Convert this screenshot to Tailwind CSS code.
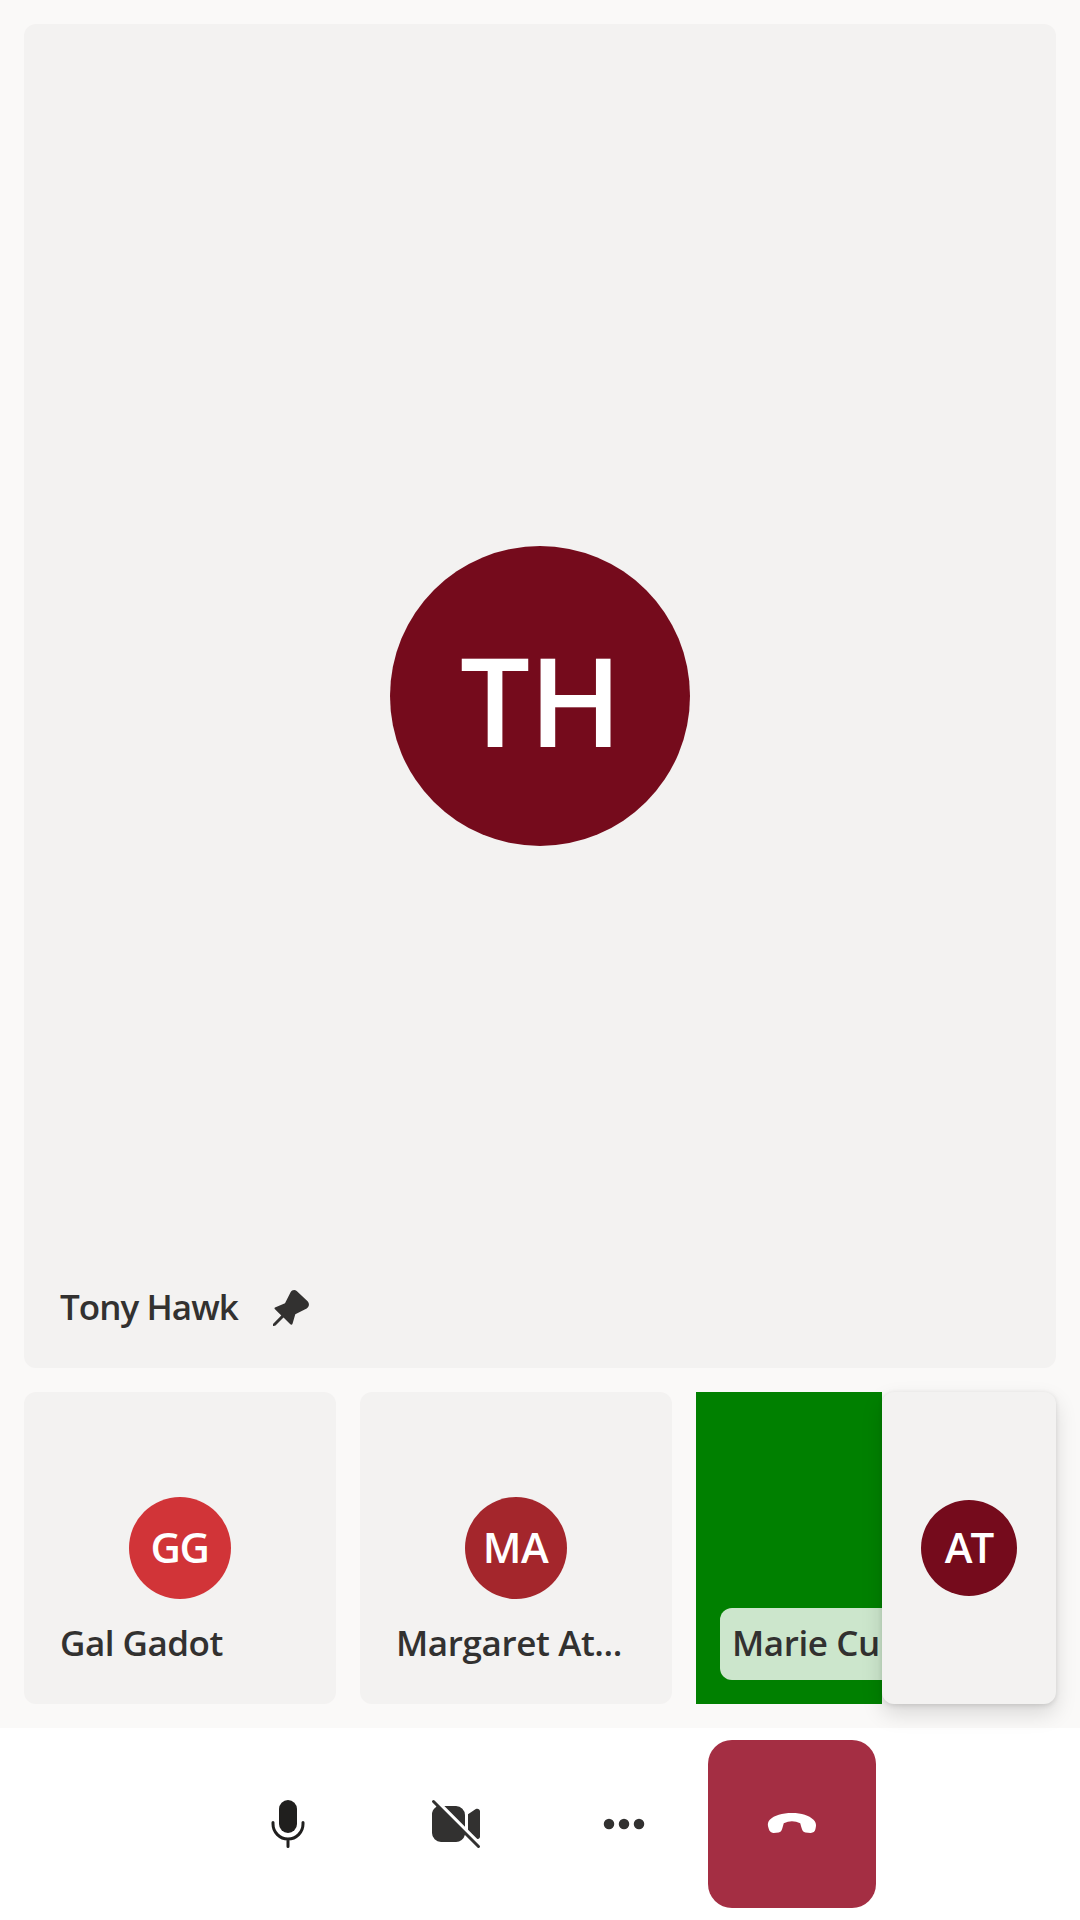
<!DOCTYPE html>
<html lang="en">
<head>
<meta charset="utf-8">
<title>Call</title>
<script src="https://cdn.jsdelivr.net/npm/@tailwindcss/browser@4"></script>
</head>
<body class="bg-white font-['Segoe_UI','Open_Sans','Noto_Sans',sans-serif] font-semibold text-[#323130]">
<div class="flex h-[1920px] w-[1080px] flex-col overflow-hidden">
  <main class="flex h-[1728px] shrink-0 flex-col gap-6 bg-[#faf9f8] p-6">
    <section class="relative flex h-[1344px] items-center justify-center rounded-xl bg-[#f3f2f1]">
      <div class="flex size-[300px] items-center justify-center rounded-full bg-[#750b1c] text-[124px] leading-none tracking-[-1px] text-white"><span class="pt-[5px] pl-px">TH</span></div>
      <div class="absolute bottom-6 left-6 flex h-[72px] items-center px-3 pb-0.5 text-[35px] tracking-[-0.95px]">
        <span class="whitespace-nowrap">Tony Hawk</span>
        <svg class="absolute left-[225px] top-[18px] size-9 overflow-visible" viewBox="0 0 36 36" fill="#323130"><path d="M17.7 2C18.7-.2 21.8-.8 23.700.900L34.600 11.300C36.800 13.600 36.200 17 33.700 18.500L22.300 24.300L19.600 33.600C19.200 34.900 18.200 35.100 17.300 34.300L10.500 27.600L2.500 35.600Q1.500 36.200 0 36V34L8.300 25.600L2 19.300C1.100 18.400 1.500 17.600 2.600 17.200L12 13.300Z"/></svg>
      </div>
    </section>
    <section class="relative flex h-[312px] gap-6">
      <div class="relative flex size-[312px] shrink-0 items-center justify-center rounded-xl bg-[#f3f2f1]">
        <div class="flex size-[102px] items-center justify-center rounded-full bg-[#d13438] pr-px pb-0.5 text-[42px] leading-none tracking-[-1.5px] text-white">GG</div>
        <div class="absolute bottom-6 left-6 flex h-[72px] items-center px-3 pb-0.5 text-[35px] tracking-[-0.5px]"><span class="whitespace-nowrap">Gal Gadot</span></div>
      </div>
      <div class="relative flex size-[312px] shrink-0 items-center justify-center rounded-xl bg-[#f3f2f1]">
        <div class="flex size-[102px] items-center justify-center rounded-full bg-[#a4262c] pr-px pb-0.5 text-[42px] leading-none tracking-[-0.5px] text-white">MA</div>
        <div class="absolute bottom-6 left-6 flex h-[72px] items-center px-3 pb-0.5 text-[35px] tracking-[-0.38px]"><span class="whitespace-nowrap">Margaret At...</span></div>
      </div>
      <div class="relative w-[186px] shrink-0 overflow-hidden bg-[#008000]">
        <div class="absolute bottom-6 left-6 flex h-[72px] items-center rounded-xl bg-white/80 px-3 pb-0.5 text-[35px] tracking-[-0.4px]"><span class="whitespace-nowrap">Marie Curie</span></div>
      </div>
      <div class="absolute top-0 right-0 flex h-[312px] w-[174px] items-center justify-center rounded-xl bg-[#f3f2f1] shadow-[0_9.6px_21.6px_rgba(0,0,0,0.132),0_1.8px_5.4px_rgba(0,0,0,0.108)]">
        <div class="flex size-24 items-center justify-center rounded-full bg-[#750b1c] pr-px pb-0.5 text-[42px] leading-none tracking-[-2px] text-white">AT</div>
      </div>
    </section>
  </main>
  <footer class="flex h-48 items-center justify-center bg-white">
    <button class="flex size-[168px] items-center justify-center" aria-label="Microphone">
      <svg class="size-[60px]" viewBox="0 0 20 20" fill="none" stroke="#201f1e" stroke-linecap="round"><rect x="7" y="2" width="6" height="11" rx="3" fill="#201f1e" stroke="none"/><path d="M5 9.500V10a5 5 0 0 0 10 0V9.500M10 15v2.500"/></svg>
    </button>
    <button class="flex size-[168px] items-center justify-center" aria-label="Camera">
      <svg class="size-[60px]" viewBox="0 0 20 20" fill="#323130"><path d="M3.700 3.900L3.270 4.450A3 3 0 0 0 2 7v6a3 3 0 0 0 3 3h5a3 3 0 0 0 2.950-2.300L13.200 13.200ZM6.120 4H10a3 3 0 0 1 3 3V10.880ZM14 6.750V11.880L17.020 14.900C17.500 15.100 18 14.800 18 14.200V5.800C18 5 17.200 4.700 16.600 5Z"/><path d="M2.500 2.500l15 15" stroke="#323130" stroke-linecap="round"/></svg>
    </button>
    <button class="flex size-[168px] items-center justify-center" aria-label="More">
      <svg class="size-[60px]" viewBox="0 0 20 20" fill="#323130"><circle cx="5" cy="10" r="1.750"/><circle cx="10" cy="10" r="1.750"/><circle cx="15" cy="10" r="1.750"/></svg>
    </button>
    <button class="flex size-[168px] items-center justify-center rounded-3xl bg-[#a42e43]" aria-label="Leave">
      <svg class="size-[60px]" viewBox="0 0 20 20" fill="#fff"><path d="m17.960 10.940-.160.830c-.150.780-.870 1.280-1.670 1.200l-1.630-.160c-.720-.070-1.050-.590-1.250-1.330-.300-1-.500-1.750-.500-1.750a6.630 6.630 0 0 0-5.500 0s-.200.750-.500 1.750c-.200.670-.500 1.260-1.200 1.330l-1.630.160c-.810.080-1.400-.400-1.620-1.190l-.250-.840c-.250-.830-.050-1.740.540-2.360C4.100 7.100 6.670 6.330 9.990 6.330c3.330 0 5.600.770 7.180 2.250.650.600.970 1.500.800 2.360Z"/></svg>
    </button>
  </footer>
</div>
</body>
</html>
